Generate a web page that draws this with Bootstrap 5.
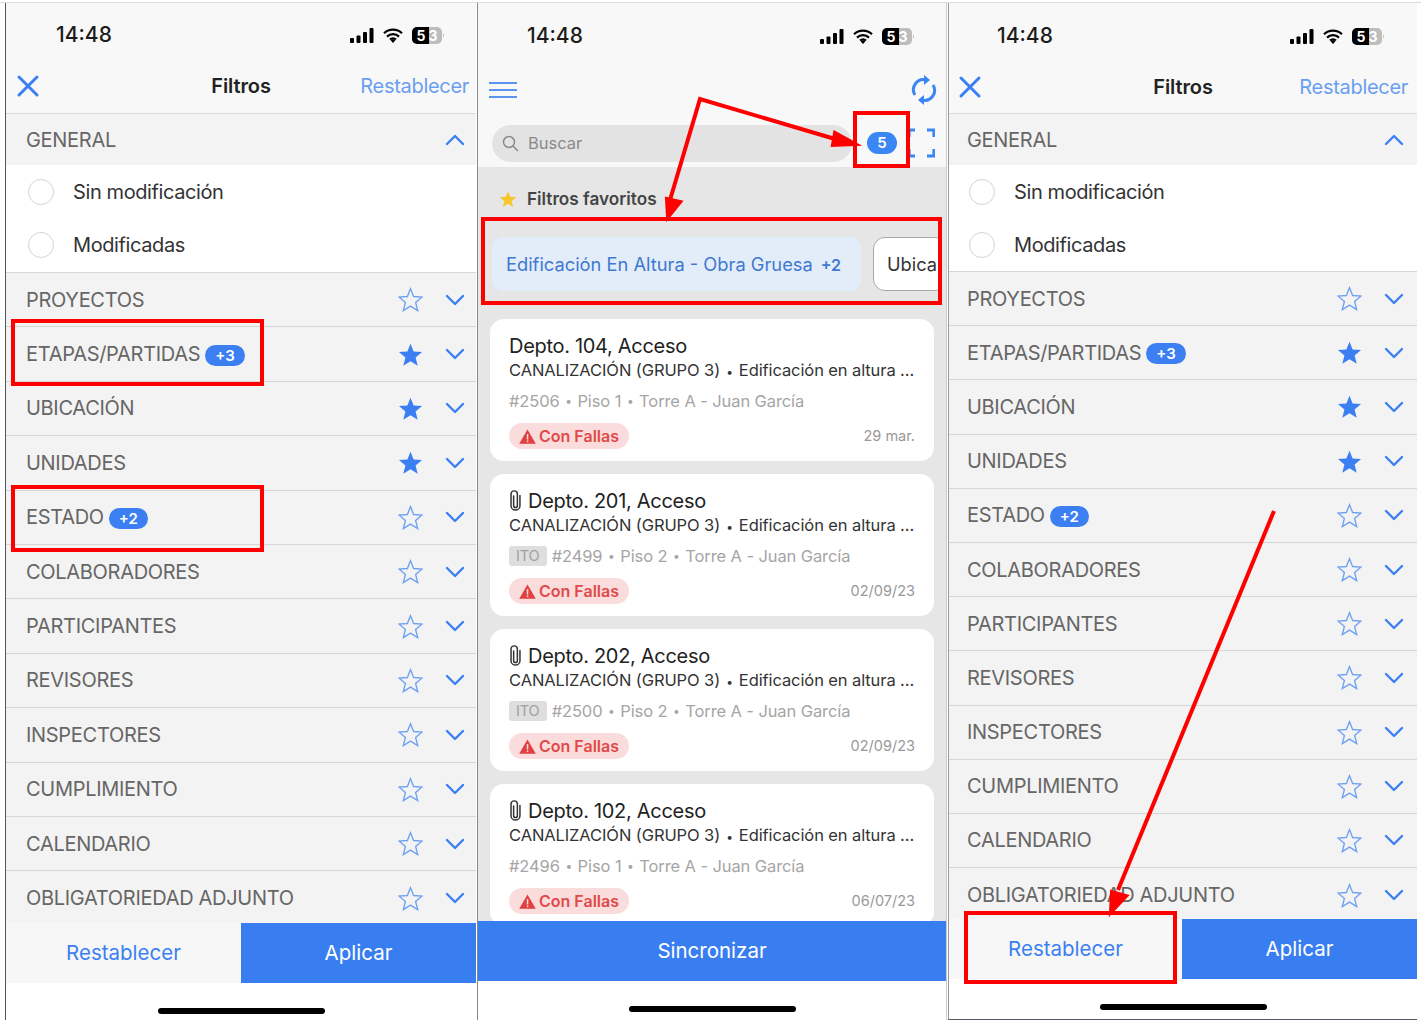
<!DOCTYPE html>
<html lang="es">
<head>
<meta charset="utf-8">
<title>Filtros</title>
<link href="https://cdn.jsdelivr.net/npm/bootstrap@5.3.0/dist/css/bootstrap.min.css" rel="stylesheet">
<style>
html,body{height:1027px;overflow:hidden;background:#fff}
body{font-family:Inter,"Liberation Sans",sans-serif;color:#222}
.sheet{position:relative;width:1421px;height:1027px;padding:3px 0 0 5px;box-shadow:inset 0 2px 0 #fff,inset 0 3px 0 #ddd}
.phone{height:1017px;overflow:hidden;background:#fff;border-left:1px solid #555;flex:none}
.ph-a{width:471px;--rowh:54.4px;--padl:20px;--padr:11px;--homeh:37px}
.ph-b{width:470px;margin-left:1px;--homeh:39px;border-left-color:#888;border-right:1px solid #ccc}
.ph-c{width:469px;margin-left:1px;--rowh:54.2px;--padl:18px;--padr:13px;--homeh:40px;border-left-color:#999;border-bottom:1px solid #556}
.topzone{background:#f8f8f8;flex:none}
.statusbar{height:61px;display:flex;align-items:center;justify-content:space-between;padding:3px 32px 0 50px}
.ph-b .statusbar{height:60px;padding:6px 32px 0 49px}
.ph-c .statusbar{padding:5px 33px 0 48px}
.status-icons{display:flex;align-items:center;gap:9px}
.clock{font-size:21px;font-weight:500;color:#1c1c1c}
.toolbar{height:50px;display:flex;align-items:center;justify-content:space-between;padding:0 7px 5px 10px;position:relative;border-bottom:1px solid #d8d8d8}
.ph-c .toolbar{padding:0 9px 3px 9px}
.bar-title{position:absolute;left:0;right:0;text-align:center;font-size:20px;font-weight:600;color:#222;letter-spacing:-.1px}
.bar-link{font-size:20px;color:#6a9ff0;position:relative;letter-spacing:-.3px}
.glyph{display:block;flex:none}
.fl-list{flex:1 1 0;overflow:hidden;border-radius:0}
.fl-row.list-group-item{flex:none;height:var(--rowh);background:#f3f3f3;border:0;border-bottom:1px solid #d6d6d6;display:flex;align-items:center;padding:0 var(--padr) 0 var(--padl);font-size:20px;color:#666;letter-spacing:-.3px}
.fl-row.is-head{height:51px;border-bottom:0}
.fl-opt.list-group-item{height:53px;background:#fff;border:0;display:flex;align-items:center;padding:0 0 0 var(--padl);font-size:20px;color:#333;letter-spacing:-.4px}
.fl-opts.list-group-item{flex:none;height:108px;padding:0;border:0;border-bottom:1px solid #d6d6d6}
.ph-c .fl-opts.list-group-item{height:107px}
.radio-dot{width:26px;height:26px;border:1.5px solid #d4d4d4;border-radius:50%;margin:0 19px 0 2px;flex:none}
.count-pill.badge{background:#3b7ff2;color:#fff;font-size:15px;font-weight:600;padding:3px 10px;margin:2px 0 0 5px;line-height:15px;letter-spacing:0}
.row-star{margin-left:auto;margin-right:22.5px}
.foot-bar{height:60px;display:flex;flex:none}
.foot-bar .btn{flex:1 1 50%;border:0;border-radius:0;font-size:20.5px}
.ph-c .foot-bar .btn-soft{flex:0 0 233px}
.btn-soft{background:#f7f7f7;color:#3b7ff2}
.btn-fill{background:#397ef1;color:#fff}
.home-zone{height:var(--homeh);flex:none;display:flex;justify-content:center;padding-top:25px}
.home-pill{width:167px;height:6px;border-radius:3px;background:#000}
.navline{height:62px;display:flex;justify-content:space-between;align-items:center;padding:0 9px 8px 11px}
.searchline{height:42px;display:flex;align-items:flex-start;padding:0 10px 0 14px}
.searchbox{width:360px;height:37px;background:#e3e3e3;border-radius:19px;display:flex;align-items:center;padding-left:10px;color:#8a8a8a;font-size:16.5px}
.search-ico{margin-right:9px}
.count-dot{width:30px;height:22px;border-radius:11px;background:#3b86f5;color:#fff;font-size:15px;font-weight:600;display:flex;align-items:center;justify-content:center;margin:7px 0 0 15px;flex:none}
.frame-ico{margin:3px 0 0 8px}
.feed{flex:1 1 0;overflow:hidden;background:#e6e6e6}
.fav-head{height:52px;display:flex;align-items:center;padding:11px 0 0 21px;font-size:17.2px;font-weight:600;color:#444}
.fav-star{margin-right:10px}
.chips{height:54px;margin-top:18px;display:flex;gap:12px;padding-left:14px;width:461px;overflow:hidden}
.chip{height:54px;border-radius:12px;display:flex;align-items:center;font-size:18.3px;white-space:nowrap;flex:none;padding-top:1px}
.chip-on{background:#e3edfa;color:#3f78d0;padding:1px 20px 0 14px;width:369px}
.chip-on b{font-size:16px;font-weight:600;margin-left:8px}
.chip-off{background:#fff;border:1px solid #aaa;padding:1px 9px 0 13px;color:#333}
.work.card{margin:0 12px 13px 12px;height:142px;border:0;border-radius:14px;background:#fff;padding:14px 19px 0;display:block}
.chips + .work.card{margin-top:28px}
.w-title{font-size:20px;line-height:26px;color:#222;display:flex;align-items:center;letter-spacing:-.3px}
.clip-ico{margin-right:6px}
.w-sub{font-size:16.5px;line-height:22px;color:#333;white-space:nowrap;letter-spacing:-.1px}
.w-meta{font-size:16.5px;line-height:24px;color:#a5a5a5;margin-top:6px;display:flex;align-items:center;letter-spacing:-.1px;white-space:pre}
.dotsep{font-size:12px;margin:0 1.500px}
.w-meta .dotsep{margin:0 1px}
.ito-tag{background:#dedede;color:#a0a0a0;border-radius:3px;font-size:14.5px;padding:0 7px;height:20px;line-height:20px;margin-right:5px}
.w-foot{display:flex;justify-content:space-between;align-items:center;margin-top:10px}
.fail-pill.badge{background:#fbdcdc;color:#e04a4a;border-radius:13px;height:26px;padding:0 10px;font-size:16px;font-weight:600;display:flex;align-items:center;gap:3px}
.w-date{font-size:14.5px;color:#999}
.marks{position:absolute;left:0;top:0;pointer-events:none}
</style>
</head>
<body>
<svg class="d-none" xmlns="http://www.w3.org/2000/svg">
<symbol id="i-star" viewBox="0 0 24 24"><path d="M12 1.600l3 7.500 8.100.5-6.200 5.200 2 7.900L12 18.400l-6.900 4.300 2-7.900L.9 9.600 9 9.100z" fill="none" stroke="#6fa1f2" stroke-width="1.300"/></symbol>
<symbol id="i-starf" viewBox="0 0 24 24"><path d="M12 1.600l3 7.500 8.100.5-6.200 5.200 2 7.900L12 18.400l-6.900 4.300 2-7.900L.9 9.600 9 9.100z" fill="#3b7ff2"/></symbol>
<symbol id="i-down" viewBox="0 0 20 12"><path d="M2 2l8 8 8-8" fill="none" stroke="#3b7ff2" stroke-width="2.400" stroke-linecap="round" stroke-linejoin="round"/></symbol>
<symbol id="i-up" viewBox="0 0 20 12"><path d="M2 10l8-8 8 8" fill="none" stroke="#3b7ff2" stroke-width="2.400" stroke-linecap="round" stroke-linejoin="round"/></symbol>
<symbol id="i-x" viewBox="0 0 24 24"><path d="M3 3l18 18M21 3L3 21" fill="none" stroke="#3b7ff2" stroke-width="3" stroke-linecap="round"/></symbol>
<symbol id="i-signal" viewBox="0 0 24 15"><rect x="0" y="10" width="4" height="5" rx="1"/><rect x="6.500" y="7.500" width="4" height="7.500" rx="1"/><rect x="13" y="4" width="4" height="11" rx="1"/><rect x="19.500" y="0" width="4" height="15" rx="1"/></symbol>
<symbol id="i-wifi" viewBox="0 0 20 15"><path d="M1 5.300a13 13 0 0 1 18 0M4 8.600a8.600 8.600 0 0 1 12 0M7 11.600a4.200 4.200 0 0 1 6 0" fill="none" stroke="#000" stroke-width="2.200"/><path d="M10 15l-2.300-2.600a3.300 3.300 0 0 1 4.600 0z"/></symbol>
<symbol id="i-batt" viewBox="0 0 32 17"><rect x="0" y="0" width="30" height="17" rx="5" fill="#bdbdbd"/><path d="M5 0h12v17H5a5 5 0 0 1-5-5V5a5 5 0 0 1 5-5z" fill="#000"/><path d="M31 6.500c1 .5 1 3.500 0 4z" fill="#aaa"/><text x="9" y="13.500" font-size="14" font-weight="700" text-anchor="middle" fill="#fff" font-family="Inter,sans-serif">5</text><text x="21" y="13.500" font-size="14" font-weight="700" text-anchor="middle" fill="#fff" font-family="Inter,sans-serif">3</text></symbol>
<symbol id="i-clip" viewBox="0 0 14 24"><path d="M5 6.500V17a2 2 0 0 0 4 0V4.500a3.400 3.400 0 0 0-6.800 0V17a4.800 4.800 0 0 0 9.600 0V6" fill="none" stroke="#333" stroke-width="1.600" stroke-linecap="round"/></symbol>
<symbol id="i-warn" viewBox="0 0 17 15"><path d="M8.500.5L16.800 14.800H.2z" fill="#e04040"/><rect x="7.800" y="5" width="1.500" height="5.500" fill="#fbdcdc"/><rect x="7.800" y="11.500" width="1.500" height="1.600" fill="#fbdcdc"/></symbol>
</svg>

<div class="sheet d-flex">

<section class="phone ph-a d-flex flex-column">
  <div class="topzone">
    <div class="statusbar"><span class="clock">14:48</span>
      <span class="status-icons"><svg class="glyph" width="24" height="15"><use href="#i-signal"/></svg><svg class="glyph" width="20" height="15"><use href="#i-wifi"/></svg><svg class="glyph" width="32" height="17"><use href="#i-batt"/></svg></span></div>
    <div class="toolbar"><svg class="glyph" width="24" height="24"><use href="#i-x"/></svg><span class="bar-title">Filtros</span><span class="bar-link">Restablecer</span></div>
  </div>
  <ul class="fl-list list-group list-group-flush">
    <li class="list-group-item fl-row is-head">GENERAL<svg class="glyph ms-auto" width="20" height="12"><use href="#i-up"/></svg></li>
    <li class="fl-opts list-group-item">
      <div class="list-group-item fl-opt"><span class="radio-dot"></span>Sin modificación</div>
      <div class="list-group-item fl-opt"><span class="radio-dot"></span>Modificadas</div>
    </li>
    <li class="list-group-item fl-row">PROYECTOS<svg class="glyph row-star" width="25" height="25"><use href="#i-star"/></svg><svg class="glyph" width="20" height="12"><use href="#i-down"/></svg></li>
    <li class="list-group-item fl-row">ETAPAS/PARTIDAS<span class="badge rounded-pill count-pill">+3</span><svg class="glyph row-star" width="25" height="25"><use href="#i-starf"/></svg><svg class="glyph" width="20" height="12"><use href="#i-down"/></svg></li>
    <li class="list-group-item fl-row">UBICACIÓN<svg class="glyph row-star" width="25" height="25"><use href="#i-starf"/></svg><svg class="glyph" width="20" height="12"><use href="#i-down"/></svg></li>
    <li class="list-group-item fl-row">UNIDADES<svg class="glyph row-star" width="25" height="25"><use href="#i-starf"/></svg><svg class="glyph" width="20" height="12"><use href="#i-down"/></svg></li>
    <li class="list-group-item fl-row">ESTADO<span class="badge rounded-pill count-pill">+2</span><svg class="glyph row-star" width="25" height="25"><use href="#i-star"/></svg><svg class="glyph" width="20" height="12"><use href="#i-down"/></svg></li>
    <li class="list-group-item fl-row">COLABORADORES<svg class="glyph row-star" width="25" height="25"><use href="#i-star"/></svg><svg class="glyph" width="20" height="12"><use href="#i-down"/></svg></li>
    <li class="list-group-item fl-row">PARTICIPANTES<svg class="glyph row-star" width="25" height="25"><use href="#i-star"/></svg><svg class="glyph" width="20" height="12"><use href="#i-down"/></svg></li>
    <li class="list-group-item fl-row">REVISORES<svg class="glyph row-star" width="25" height="25"><use href="#i-star"/></svg><svg class="glyph" width="20" height="12"><use href="#i-down"/></svg></li>
    <li class="list-group-item fl-row">INSPECTORES<svg class="glyph row-star" width="25" height="25"><use href="#i-star"/></svg><svg class="glyph" width="20" height="12"><use href="#i-down"/></svg></li>
    <li class="list-group-item fl-row">CUMPLIMIENTO<svg class="glyph row-star" width="25" height="25"><use href="#i-star"/></svg><svg class="glyph" width="20" height="12"><use href="#i-down"/></svg></li>
    <li class="list-group-item fl-row">CALENDARIO<svg class="glyph row-star" width="25" height="25"><use href="#i-star"/></svg><svg class="glyph" width="20" height="12"><use href="#i-down"/></svg></li>
    <li class="list-group-item fl-row">OBLIGATORIEDAD ADJUNTO<svg class="glyph row-star" width="25" height="25"><use href="#i-star"/></svg><svg class="glyph" width="20" height="12"><use href="#i-down"/></svg></li>
  </ul>
  <div class="foot-bar"><button class="btn btn-soft">Restablecer</button><button class="btn btn-fill">Aplicar</button></div>
  <div class="home-zone"><span class="home-pill"></span></div>
</section>

<section class="phone ph-b d-flex flex-column">
  <div class="topzone">
    <div class="statusbar"><span class="clock">14:48</span>
      <span class="status-icons"><svg class="glyph" width="24" height="15"><use href="#i-signal"/></svg><svg class="glyph" width="20" height="15"><use href="#i-wifi"/></svg><svg class="glyph" width="32" height="17"><use href="#i-batt"/></svg></span></div>
    <div class="navline">
      <svg class="glyph" width="28" height="18" viewBox="0 0 28 18"><path d="M0 2h28M0 9h28M0 16h28" stroke="#5a93f0" stroke-width="2"/></svg>
      <svg class="glyph" width="26" height="32" viewBox="0 0 26 32"><path d="M4 21a10 10 0 0 1 11-15" fill="none" stroke="#3b86f5" stroke-width="3"/><path d="M22 11a10 10 0 0 1-11 15" fill="none" stroke="#3b86f5" stroke-width="3"/><path d="M13 1l6 5-6 5z" fill="#3b86f5"/><path d="M13 21l-6 5 6 5z" fill="#3b86f5"/></svg>
    </div>
    <div class="searchline">
      <div class="searchbox"><svg class="glyph search-ico" width="17" height="17" viewBox="0 0 17 17"><circle cx="7" cy="7" r="5.500" fill="none" stroke="#8a8a8a" stroke-width="1.500"/><path d="M11 11l5 5" stroke="#8a8a8a" stroke-width="1.500"/></svg>Buscar</div>
      <div class="count-dot">5</div>
      <svg class="glyph frame-ico" width="30" height="30" viewBox="-1 -1 30 30"><path d="M3 8V1h6M21 1h7v7M28 20v7h-7M9 27H3v-7" fill="none" stroke="#3b86f5" stroke-width="3.200"/></svg>
    </div>
  </div>
  <div class="feed">
    <div class="fav-head"><svg class="glyph fav-star" width="18" height="18" viewBox="0 0 24 24"><path d="M12 1.600l3 7.500 8.100.5-6.200 5.200 2 7.900L12 18.400l-6.900 4.300 2-7.900L.9 9.600 9 9.100z" fill="#f8c62c"/></svg>Filtros favoritos</div>
    <div class="chips"><div class="chip chip-on">Edificación En Altura - Obra Gruesa<b>+2</b></div><div class="chip chip-off">Ubica</div></div>
    <article class="card work"><div class="w-title">Depto. 104, Acceso</div><div class="w-sub">CANALIZACIÓN (GRUPO 3) <span class="dotsep">•</span> Edificación en altura ...</div><div class="w-meta">#2506 <span class="dotsep">•</span> Piso 1 <span class="dotsep">•</span> Torre A - Juan García</div><div class="w-foot"><span class="badge fail-pill"><svg class="glyph" width="17" height="15"><use href="#i-warn"/></svg>Con Fallas</span><span class="w-date">29 mar.</span></div></article>
    <article class="card work"><div class="w-title"><svg class="glyph clip-ico" width="13" height="24"><use href="#i-clip"/></svg>Depto. 201, Acceso</div><div class="w-sub">CANALIZACIÓN (GRUPO 3) <span class="dotsep">•</span> Edificación en altura ...</div><div class="w-meta"><span class="ito-tag">ITO</span>#2499 <span class="dotsep">•</span> Piso 2 <span class="dotsep">•</span> Torre A - Juan García</div><div class="w-foot"><span class="badge fail-pill"><svg class="glyph" width="17" height="15"><use href="#i-warn"/></svg>Con Fallas</span><span class="w-date">02/09/23</span></div></article>
    <article class="card work"><div class="w-title"><svg class="glyph clip-ico" width="13" height="24"><use href="#i-clip"/></svg>Depto. 202, Acceso</div><div class="w-sub">CANALIZACIÓN (GRUPO 3) <span class="dotsep">•</span> Edificación en altura ...</div><div class="w-meta"><span class="ito-tag">ITO</span>#2500 <span class="dotsep">•</span> Piso 2 <span class="dotsep">•</span> Torre A - Juan García</div><div class="w-foot"><span class="badge fail-pill"><svg class="glyph" width="17" height="15"><use href="#i-warn"/></svg>Con Fallas</span><span class="w-date">02/09/23</span></div></article>
    <article class="card work"><div class="w-title"><svg class="glyph clip-ico" width="13" height="24"><use href="#i-clip"/></svg>Depto. 102, Acceso</div><div class="w-sub">CANALIZACIÓN (GRUPO 3) <span class="dotsep">•</span> Edificación en altura ...</div><div class="w-meta">#2496 <span class="dotsep">•</span> Piso 1 <span class="dotsep">•</span> Torre A - Juan García</div><div class="w-foot"><span class="badge fail-pill"><svg class="glyph" width="17" height="15"><use href="#i-warn"/></svg>Con Fallas</span><span class="w-date">06/07/23</span></div></article>
  </div>
  <div class="foot-bar"><button class="btn btn-fill">Sincronizar</button></div>
  <div class="home-zone"><span class="home-pill"></span></div>
</section>

<section class="phone ph-c d-flex flex-column">
  <div class="topzone">
    <div class="statusbar"><span class="clock">14:48</span>
      <span class="status-icons"><svg class="glyph" width="24" height="15"><use href="#i-signal"/></svg><svg class="glyph" width="20" height="15"><use href="#i-wifi"/></svg><svg class="glyph" width="32" height="17"><use href="#i-batt"/></svg></span></div>
    <div class="toolbar"><svg class="glyph" width="24" height="24"><use href="#i-x"/></svg><span class="bar-title">Filtros</span><span class="bar-link">Restablecer</span></div>
  </div>
  <ul class="fl-list list-group list-group-flush">
    <li class="list-group-item fl-row is-head">GENERAL<svg class="glyph ms-auto" width="20" height="12"><use href="#i-up"/></svg></li>
    <li class="fl-opts list-group-item">
      <div class="list-group-item fl-opt"><span class="radio-dot"></span>Sin modificación</div>
      <div class="list-group-item fl-opt"><span class="radio-dot"></span>Modificadas</div>
    </li>
    <li class="list-group-item fl-row">PROYECTOS<svg class="glyph row-star" width="25" height="25"><use href="#i-star"/></svg><svg class="glyph" width="20" height="12"><use href="#i-down"/></svg></li>
    <li class="list-group-item fl-row">ETAPAS/PARTIDAS<span class="badge rounded-pill count-pill">+3</span><svg class="glyph row-star" width="25" height="25"><use href="#i-starf"/></svg><svg class="glyph" width="20" height="12"><use href="#i-down"/></svg></li>
    <li class="list-group-item fl-row">UBICACIÓN<svg class="glyph row-star" width="25" height="25"><use href="#i-starf"/></svg><svg class="glyph" width="20" height="12"><use href="#i-down"/></svg></li>
    <li class="list-group-item fl-row">UNIDADES<svg class="glyph row-star" width="25" height="25"><use href="#i-starf"/></svg><svg class="glyph" width="20" height="12"><use href="#i-down"/></svg></li>
    <li class="list-group-item fl-row">ESTADO<span class="badge rounded-pill count-pill">+2</span><svg class="glyph row-star" width="25" height="25"><use href="#i-star"/></svg><svg class="glyph" width="20" height="12"><use href="#i-down"/></svg></li>
    <li class="list-group-item fl-row">COLABORADORES<svg class="glyph row-star" width="25" height="25"><use href="#i-star"/></svg><svg class="glyph" width="20" height="12"><use href="#i-down"/></svg></li>
    <li class="list-group-item fl-row">PARTICIPANTES<svg class="glyph row-star" width="25" height="25"><use href="#i-star"/></svg><svg class="glyph" width="20" height="12"><use href="#i-down"/></svg></li>
    <li class="list-group-item fl-row">REVISORES<svg class="glyph row-star" width="25" height="25"><use href="#i-star"/></svg><svg class="glyph" width="20" height="12"><use href="#i-down"/></svg></li>
    <li class="list-group-item fl-row">INSPECTORES<svg class="glyph row-star" width="25" height="25"><use href="#i-star"/></svg><svg class="glyph" width="20" height="12"><use href="#i-down"/></svg></li>
    <li class="list-group-item fl-row">CUMPLIMIENTO<svg class="glyph row-star" width="25" height="25"><use href="#i-star"/></svg><svg class="glyph" width="20" height="12"><use href="#i-down"/></svg></li>
    <li class="list-group-item fl-row">CALENDARIO<svg class="glyph row-star" width="25" height="25"><use href="#i-star"/></svg><svg class="glyph" width="20" height="12"><use href="#i-down"/></svg></li>
    <li class="list-group-item fl-row">OBLIGATORIEDAD ADJUNTO<svg class="glyph row-star" width="25" height="25"><use href="#i-star"/></svg><svg class="glyph" width="20" height="12"><use href="#i-down"/></svg></li>
  </ul>
  <div class="foot-bar"><button class="btn btn-soft">Restablecer</button><button class="btn btn-fill">Aplicar</button></div>
  <div class="home-zone"><span class="home-pill"></span></div>
</section>

<svg class="marks" width="1421" height="1027" viewBox="0 0 1421 1027" fill="none" stroke="#f00" stroke-width="4">
  <rect x="13" y="321" width="249" height="63"/>
  <rect x="13" y="487" width="249" height="63"/>
  <rect x="855" y="113" width="53" height="53"/>
  <rect x="483" y="219" width="457" height="84"/>
  <rect x="966" y="913" width="209" height="69"/>
  <path d="M670 200L700 99 835 139"/>
  <path d="M835 133L855 144 833 145z" fill="#f00"/>
  <path d="M667 199L668 217 680 202z" fill="#f00"/>
  <path d="M1274 511L1118 890"/>
  <path d="M1112 892L1111 912 1126 896z" fill="#f00"/>
</svg>
</div>
</body>
</html>
